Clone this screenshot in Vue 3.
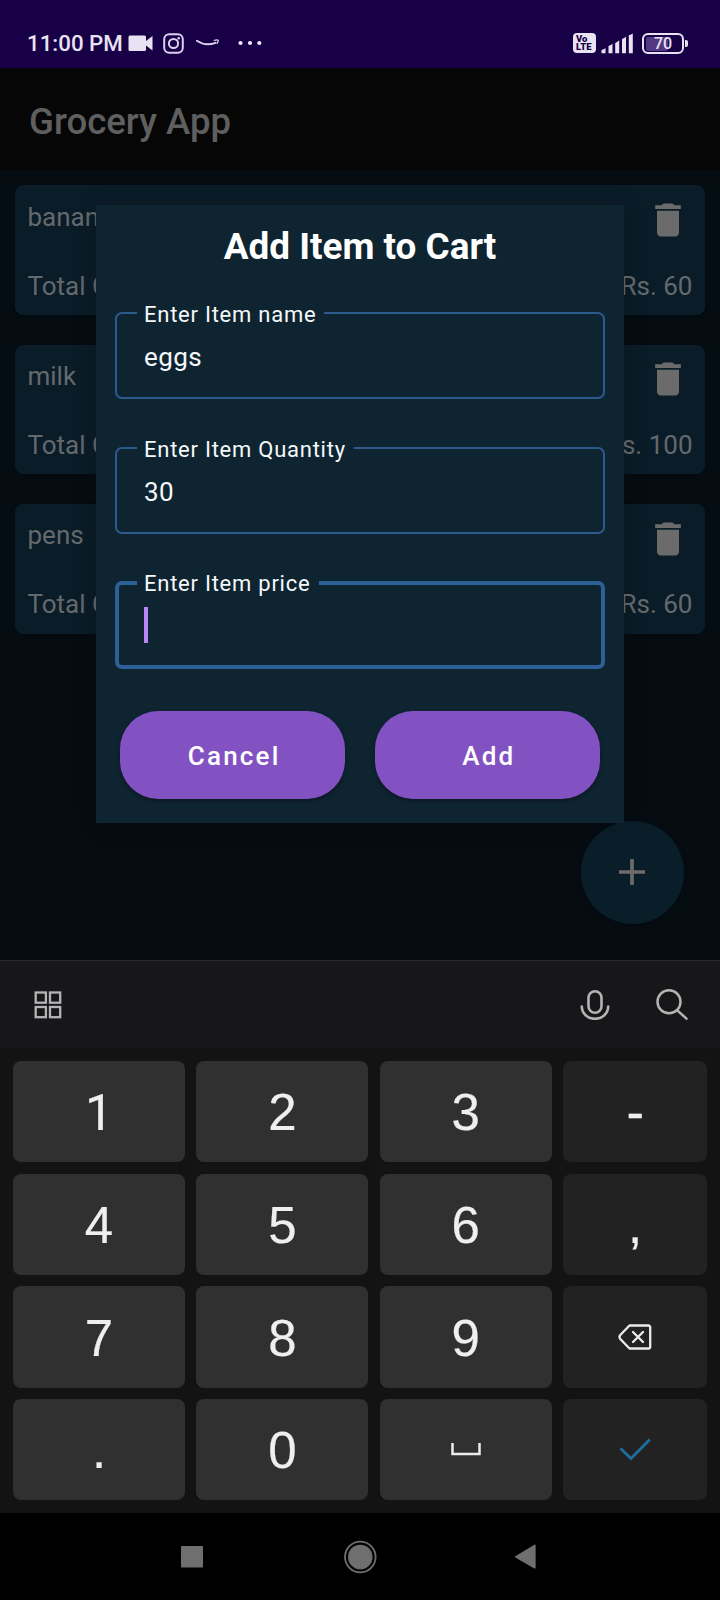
<script setup>
const items = [
  { name: 'banana', total: 'Rs. 60' },
  { name: 'milk', total: 'Rs. 100' },
  { name: 'pens', total: 'Rs. 60' },
]
const fields = [
  { label: 'Enter Item name', value: 'eggs' },
  { label: 'Enter Item Quantity', value: '30' },
  { label: 'Enter Item price', value: '', focused: true },
]
const keys = ['1', '2', '3', '-', '4', '5', '6', ',', '7', '8', '9', 'back', '.', '0', 'space', 'done']
const side = (i) => i % 4 === 3
</script>

<template>
  <div class="phone">
    <header class="status">
      <span class="clock">11:00 PM</span>
      <svg class="cam" width="25" height="17" viewBox="0 0 25 17"><path d="M2 .5h14.500a1.500 1.500 0 0 1 1.500 1.500v4L24.500 1v14.500L18 10.500V14.500a1.500 1.500 0 0 1-1.500 1.500H2A1.500 1.500 0 0 1 .5 14.500V2A1.500 1.500 0 0 1 2 .5z" fill="#e9e2f3" /></svg>
      <svg class="insta" width="21" height="21" viewBox="0 0 21 21" fill="none" stroke="#dccff0" stroke-width="2"><rect x="1.200" y="1.200" width="18.600" height="18.600" rx="5" /><circle cx="10.500" cy="10.500" r="4.600" /><circle cx="15.700" cy="5.300" r="1.300" fill="#dccff0" stroke="none" /></svg>
      <svg class="smile" width="24" height="8" viewBox="0 0 24 8" fill="none" stroke="#dccff0" stroke-linecap="round" stroke-linejoin="round"><path d="M.8 1.800Q9.500 7.600 19.500 3.800" stroke-width="1.900" /><path d="M18.300 1.300q3-.9 3.900-.1.300 1-1.200 3.100" stroke-width="1.300" /></svg>
      <svg class="dots" width="24" height="6" viewBox="0 0 24 6" fill="#eee8f8"><circle cx="2.500" cy="3" r="2.100" /><circle cx="12" cy="3" r="2.100" /><circle cx="21.300" cy="3" r="2.100" /></svg>
      <span class="grow"></span>
      <span class="volte"><span>Vo</span><span>LTE</span></span>
      <svg class="signal" width="33" height="21" viewBox="0 0 33 21" fill="#e9e2f3"><path d="M.5 20.300v-3.300q2.500-.5 4-2v5.300zM7.500 20.300v-7.300q2.500-.6 4-2.200v9.500zM14.200 20.300V10q2.500-1 4-2.700v13zM21 20.300V6q2.500-1 4-2.500v16.800zM27.800 20.300V2.200q2.500-.5 4-1.800v19.900z" /></svg>
      <span class="battery"><i></i><b>70</b></span>
      <span class="tip"></span>
    </header>

    <div class="appbar">Grocery App</div>

    <main class="content">
      <section v-for="item in items" :key="item.name" class="card">
        <div class="row">
          <span>{{ item.name }}</span>
          <svg class="trash" width="44" height="44" viewBox="0 0 24 24" fill="#6b6b6b"><path d="M6 19c0 1.100.9 2 2 2h8c1.100 0 2-.9 2-2V7H6v12zM19 4h-3.500l-1-1h-5l-1 1H5v2h14V4z" /></svg>
        </div>
        <div class="row"><span>Total Cost</span><span>{{ item.total }}</span></div>
      </section>

      <button class="fab"><svg width="26" height="26" viewBox="0 0 26 26"><path d="M13 0v26M0 13h26" stroke="#6d6a69" stroke-width="3.700" /></svg></button>

      <div class="dialog">
        <h2>Add Item to Cart</h2>
        <fieldset v-for="f in fields" :key="f.label" :class="{ focused: f.focused }">
          <legend>{{ f.label }}</legend>
          <div class="value">{{ f.value }}<span v-if="f.focused" class="caret"></span></div>
        </fieldset>
        <div class="actions"><button>Cancel</button><button>Add</button></div>
      </div>
    </main>

    <div class="tools">
      <svg width="28" height="28" viewBox="0 0 28 28" fill="none" stroke="#b4b4b6" stroke-width="2.300"><rect x="1.700" y="1.500" width="10.200" height="10.200" /><rect x="16" y="1.500" width="10.200" height="10.200" /><rect x="1.700" y="16" width="10.200" height="10.200" /><rect x="16" y="16" width="10.200" height="10.200" /></svg>
      <span class="grow"></span>
      <svg class="mic" width="30" height="30" viewBox="0 0 30 30" fill="none" stroke="#b4b4b4" stroke-width="2.600" stroke-linecap="round"><rect x="8.500" y="1.300" width="13" height="21.400" rx="6.500" /><path d="M1.800 16.500a13.200 12.300 0 0 0 26.400 0" /></svg>
      <svg width="32" height="31" viewBox="0 0 32 31" fill="none" stroke="#b4b4b4" stroke-width="2.500" stroke-linecap="round"><circle cx="13" cy="12.800" r="11.500" /><path d="M21.300 21.300l9.200 8.400" /></svg>
    </div>

    <div class="keyboard">
      <div v-for="(k, i) in keys" :key="k" class="key" :class="{ side: side(i) }">
        <svg v-if="k === 'back'" width="34" height="26" viewBox="0 0 34 26" fill="none" stroke="#ececec" stroke-width="2.300" stroke-linecap="round" stroke-linejoin="round"><path d="M11.500 1.500h19a1.700 1.700 0 0 1 1.700 1.700v19.600a1.700 1.700 0 0 1-1.700 1.700h-19L2.300 15q-1.600-2 0-4z" /><path d="M15 8l10 10M25 8L15 18" /></svg>
        <svg v-else-if="k === 'space'" width="30" height="13" viewBox="0 0 30 13" fill="none" stroke="#ececec" stroke-width="2.500"><path d="M1.500 0v11h27V0" /></svg>
        <svg v-else-if="k === 'done'" width="32" height="23" viewBox="0 0 32 23" fill="none" stroke="#1c6e9b" stroke-width="2.900"><path d="M1.500 10.500L12 20.500L30.800 1.500" /></svg>
        <span v-else :class="{ one: k === '1', dash: k === '-' }">{{ k }}</span>
      </div>
    </div>

    <nav class="nav">
      <svg width="720" height="87" viewBox="0 0 720 87" fill="#6f6f6f"><rect x="181" y="33" width="22" height="21.500" rx=".8" /><circle cx="360.300" cy="44" r="12.300" /><circle cx="360.300" cy="44" r="15.300" fill="none" stroke="#6f6f6f" stroke-width="1.800" /><path d="M515.300 43.200L534.300 31.800q1.300-.6 1.300.8v22q0 1.400-1.300.8L515.300 44.400q-1-.6 0-1.200z" /></svg>
    </nav>
  </div>
</template>

<style>
body { background: #000; }
</style>

<style scoped>
* { box-sizing: border-box; }
.phone { width: 720px; height: 1600px; display: flex; flex-direction: column; overflow: hidden; font-family: Roboto, "Liberation Sans", sans-serif; background: #000; }
svg { display: block; flex: none; }
button { border: 0; margin: 0; padding: 0; font: inherit; }
.grow { flex: 1; }

.status { height: 68px; flex: none; background: #180046; display: flex; align-items: center; padding: 18px 32px 0 27px; color: #e9e2f3; }
.clock { width: 100.500px; font-size: 22.300px; font-weight: 500; line-height: 28px; white-space: nowrap; }
.insta { margin-left: 10.500px; }
.smile { margin-left: 12px; }
.dots { margin-left: 17.500px; }
.volte { width: 23px; height: 20px; border-radius: 4px; background: #e9e2f3; color: #180046; font-size: 9.500px; font-weight: 900; line-height: 8px; display: flex; flex-direction: column; justify-content: center; padding-left: 3.500px; }
.signal { margin-left: 5.500px; }
.battery { margin-left: 8px; width: 42px; height: 21px; border: 2.500px solid #e9e2f3; border-radius: 6px; display: grid; padding: 2px; }
.battery i { width: 22px; background: #533781; border-radius: 2px; grid-area: 1 / 1; }
.battery b { grid-area: 1 / 1; font-size: 16px; font-weight: 500; line-height: 14px; text-align: center; z-index: 1; }
.tip { width: 3px; height: 7px; background: #e9e2f3; border-radius: 0 2px 2px 0; margin-left: 1px; }

.appbar { height: 102px; flex: none; background: #060606; color: #5f5f5f; font-size: 36.600px; font-weight: 500; line-height: 108px; padding-left: 29px; }

.content { height: 790px; flex: none; background: #050d13; position: relative; padding: 15.400px 15px 0; display: flex; flex-direction: column; gap: 29.700px; }
.card { height: 129.600px; flex: none; border-radius: 8px; background: #0a1c28; box-shadow: 0 1px 4px rgba(0, 0, 0, .35); padding: 15.500px 12.500px 13.100px; display: flex; flex-direction: column; justify-content: space-between; color: #64696d; font-size: 26px; line-height: 32px; }
.row { height: 32px; display: flex; justify-content: space-between; }
.trash { margin: -2.800px 3px 0 0; }
.fab { position: absolute; left: 580.600px; top: 650.600px; width: 103px; height: 103px; border-radius: 50%; background: #0a1e2a; display: grid; place-items: center; box-shadow: 0 1px 6px rgba(0, 0, 0, .3); }

.dialog { position: absolute; left: 96px; top: 35px; width: 528px; height: 617.600px; background: #0f2431; padding: 20.200px 19px 0; box-shadow: 0 3px 22px rgba(0, 0, 0, .2); }
h2 { margin: 0 0 31px; font-size: 36.900px; line-height: 44px; font-weight: 700; color: #fff; text-align: center; }
fieldset { height: 99px; margin: 0 0 35.500px; padding: 0 0 0 27px; border: 2px solid #2c5a8c; border-radius: 7px; color: #f5f8fa; }
legend { height: 26px; line-height: 30.200px; padding: 0 8px 0 7px; margin-left: -7px; font-size: 22px; letter-spacing: .75px; white-space: nowrap; }
.value { padding-top: 15px; font-size: 26px; line-height: 32px; letter-spacing: .4px; }
fieldset.focused { height: 98.500px; margin-top: 36.500px; border-width: 4px; border-color: #2d6096; padding-left: 25px; margin-bottom: 42.500px; }
.focused legend { line-height: 28.500px; padding-right: 9px; }
.focused .value { padding: 11.300px 0 0; }
.caret { display: block; width: 4px; height: 36px; background: #b688f5; }
.actions { display: flex; gap: 29.300px; padding: 0 5px; }
.actions button { flex: 1; height: 88px; padding: 2px 0 0 3px; border-radius: 38px; background: #8352c2; color: #fff; font-size: 26px; font-weight: 500; letter-spacing: 2.200px; box-shadow: 0 2px 4px rgba(0, 0, 0, .35); }

.tools { height: 88px; flex: none; background: #171719; border-top: 1px solid #2b2b2d; display: flex; align-items: center; padding: 0 32px 0 34px; }
.mic { margin-right: 46.500px; }
.keyboard { height: 465px; flex: none; background: #131313; padding: 13px 12.500px 13px 13px; display: grid; grid-template-columns: 172px 172px 172px 144px; grid-template-rows: repeat(4, 101.300px); gap: 11.400px 11.400px; }
.key { border-radius: 8px; background: #303030; color: #efefef; display: grid; place-items: center; font-family: "Liberation Sans", Arial, sans-serif; font-size: 51px; line-height: 60px; }
.key span { padding-top: 3px; -webkit-text-stroke: .2px #efefef; }
.key .one { font-family: Roboto, sans-serif; font-size: 50px; padding-top: 2px; }
.key .dash { -webkit-text-stroke-width: .6px; }
.side { background: #222; }
.nav { height: 87px; flex: none; background: #000; }
</style>
